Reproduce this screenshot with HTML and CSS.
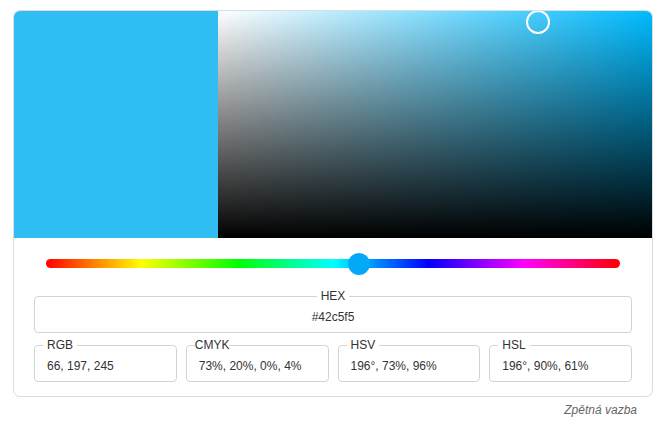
FILE: index.html
```html
<!DOCTYPE html>
<html lang="cs">
<head>
    <meta charset="UTF-8">
    <meta name="viewport" content="width=device-width, initial-scale=1.0">
    <title>Výběr barvy</title>
    <link rel="stylesheet" href="styles.css">
</head>
<body>
    <div class="wrap">
        <div class="picker-card">
            <div class="picker-top">
                <div class="swatch"></div>
                <div class="sat-area">
                    <div class="sat-cursor"></div>
                </div>
            </div>
            <div class="hue-row">
                <div class="hue-track">
                    <div class="hue-thumb"></div>
                </div>
            </div>
            <div class="fields">
                <fieldset class="field field-hex">
                    <legend>HEX</legend>
                    <div class="value">#42c5f5</div>
                </fieldset>
                <div class="field-row">
                    <fieldset class="field">
                        <legend>RGB</legend>
                        <div class="value">66, 197, 245</div>
                    </fieldset>
                    <fieldset class="field">
                        <legend class="tight">CMYK</legend>
                        <div class="value">73%, 20%, 0%, 4%</div>
                    </fieldset>
                    <fieldset class="field">
                        <legend>HSV</legend>
                        <div class="value">196°, 73%, 96%</div>
                    </fieldset>
                    <fieldset class="field">
                        <legend>HSL</legend>
                        <div class="value">196°, 90%, 61%</div>
                    </fieldset>
                </div>
            </div>
        </div>
        <div class="feedback"><a href="#">Zpětná vazba</a></div>
    </div>
</body>
</html>
```

FILE: styles.css
```css
body {
    margin: 0;
    padding: 0;
    background-color: #fff;
    font-family: "Liberation Sans", Arial, sans-serif;
    font-size: 12px;
    color: #333;
}
.wrap {
    padding: 10px 14px 0 13px;
}
.picker-card {
    border: 1px solid #dcdcdc;
    border-radius: 7px;
    overflow: hidden;
}
.picker-top {
    display: flex;
    height: 227px;
}
.swatch {
    width: 204px;
    background-color: #2fbdf3;
}
.sat-area {
    flex: 1;
    position: relative;
    background:
        linear-gradient(to bottom, rgba(0,0,0,0), #000),
        linear-gradient(to right, #fff, rgba(255,255,255,0)),
        #00bbff;
}
.sat-cursor {
    position: absolute;
    left: 73.5%;
    top: 10px;
    width: 20px;
    height: 20px;
    margin: -11px 0 0 -11px;
    border: 2px solid #fff;
    border-radius: 50%;
}
.hue-row {
    padding: 21px 32px 0;
    height: 30px;
}
.hue-track {
    position: relative;
    height: 9px;
    border-radius: 5px;
    background: linear-gradient(to right, #ff0000, #ffff00 16.6%, #00ff00 33.3%, #00ffff 50%, #0000ff 66.6%, #ff00ff 83.3%, #ff0000);
}
.hue-thumb {
    position: absolute;
    left: 54.6%;
    top: 50%;
    width: 22px;
    height: 22px;
    margin: -11px 0 0 -11px;
    border-radius: 50%;
    background-color: #03a9f4;
}
.fields {
    padding: 0 20px 14px;
    display: flex;
    flex-direction: column;
    gap: 5px;
}
.field-row {
    display: flex;
    gap: 9px;
}
.field {
    flex: 1;
    margin: 0;
    min-width: 0;
    border: 1px solid #d4d4d4;
    border-radius: 4px;
    padding: 0 12px 8px;
}
.field legend {
    padding: 0 4px;
    margin-left: -4px;
    line-height: 14px;
    font-size: 12px;
    color: #333;
}
.field legend.tight {
    padding: 0;
    margin-left: -4px;
}
.field-hex legend {
    margin: 0 auto;
}
.field-hex .value {
    text-align: center;
}
.value {
    line-height: 14px;
    padding-top: 7px;
    white-space: nowrap;
}
.feedback {
    text-align: right;
    padding: 6px 16px 0 0;
    font-size: 12px;
}
.feedback a {
    color: #666;
    font-style: italic;
    text-decoration: none;
}
```
